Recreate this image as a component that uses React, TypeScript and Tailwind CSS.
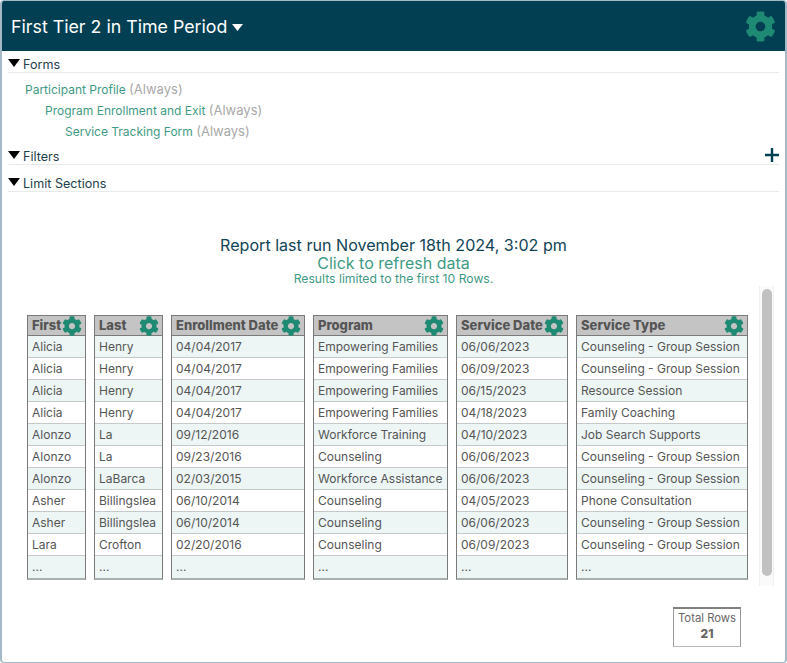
import { FaCog } from 'react-icons/fa';

const columns = [
    { title: 'First', width: 'w-[59px]', values: ['Alicia', 'Alicia', 'Alicia', 'Alicia', 'Alonzo', 'Alonzo', 'Alonzo', 'Asher', 'Asher', 'Lara'] },
    { title: 'Last', width: 'w-[69px]', values: ['Henry', 'Henry', 'Henry', 'Henry', 'La', 'La', 'LaBarca', 'Billingslea', 'Billingslea', 'Crofton'] },
    { title: 'Enrollment Date', width: 'w-[134px]', values: ['04/04/2017', '04/04/2017', '04/04/2017', '04/04/2017', '09/12/2016', '09/23/2016', '02/03/2015', '06/10/2014', '06/10/2014', '02/20/2016'] },
    { title: 'Program', width: 'w-[135px]', values: ['Empowering Families', 'Empowering Families', 'Empowering Families', 'Empowering Families', 'Workforce Training', 'Counseling', 'Workforce Assistance', 'Counseling', 'Counseling', 'Counseling'] },
    { title: 'Service Date', width: 'w-[112px]', values: ['06/06/2023', '06/09/2023', '06/15/2023', '04/18/2023', '04/10/2023', '06/06/2023', '06/06/2023', '04/05/2023', '06/06/2023', '06/09/2023'] },
    { title: 'Service Type', width: 'w-[172px]', values: ['Counseling - Group Session', 'Counseling - Group Session', 'Resource Session', 'Family Coaching', 'Job Search Supports', 'Counseling - Group Session', 'Counseling - Group Session', 'Phone Consultation', 'Counseling - Group Session', 'Counseling - Group Session'] },
];

function Triangle() {
    return (
        <svg width="12" height="8" viewBox="0 0 12 8" className="shrink-0">
            <path d="M0 0h12L6 8z" fill="#000" />
        </svg>
    );
}

function Section({ label, className, plus }: { label: string; className: string; plus?: boolean }) {
    return (
        <div className={`flex h-[17px] items-center gap-[3px] border-b border-[#e6eaea] ${className}`}>
            <span className="-mt-[2px]"><Triangle /></span>
            <span className="mt-[2px] text-[12.6px] text-[#1d3f4d]">{label}</span>
            {plus && (
                <svg width="14" height="14" viewBox="0 0 14 14" className="ml-auto -mt-[3px]">
                    <path d="M0 7h14M7 0v14" stroke="#033f52" strokeWidth="2.4" />
                </svg>
            )}
        </div>
    );
}

function FormLine({ name, indent }: { name: string; indent: string }) {
    return (
        <div className={`h-[21px] text-[12px] leading-[21px] ${indent}`}>
            <span className="text-[#3f9a85]">{name}</span> <span className="text-[13px] text-[#a9a9a9]">(Always)</span>
        </div>
    );
}

function Column({ title, width, values }: { title: string; width: string; values: string[] }) {
    return (
        <div className={`shrink-0 border-x border-b-2 border-x-[#7a7a7a] border-b-[#a8b0b0] ${width}`}>
            <div className="flex h-[21px] items-center justify-between border-y border-y-[#7a7a7a] bg-[#c4c4c4] pl-[4px] pr-[2px]">
                <span className="whitespace-nowrap text-[13px] font-extrabold text-[#555]">{title}</span>
                <FaCog className="mr-[1px] shrink-0 text-[#1f8a73]" size={20} />
            </div>
            {[...values, '...'].map((value, i) => (
                <div key={i} className={`flex h-[22px] items-center whitespace-nowrap border-b border-[#c4c9c9] pl-[4px] text-[12px] text-[#555] last:border-b-0 ${i % 2 === 0 ? 'bg-[#edf6f5]' : 'bg-white'}`}>
                    {value}
                </div>
            ))}
        </div>
    );
}

export default function App() {
    return (
        <div className="h-[663px] w-[787px] bg-white font-['Inter','Liberation_Sans',sans-serif]">
            <div className="flex h-full flex-col overflow-hidden rounded-[4px] border-x-2 border-y border-[#a3bac6]">
                <div className="flex h-[50px] shrink-0 items-center justify-between bg-[#033f52] pl-[9px] pr-[9px]">
                    <div className="flex items-center gap-[5px] pt-[2px] text-[17.8px] text-white">
                        First Tier 2 in Time Period
                        <svg width="11" height="7" viewBox="0 0 11 7"><path d="M0 0h11L5.5 7z" fill="#fff" /></svg>
                    </div>
                    <FaCog className="text-[#1f8a73]" size={31} />
                </div>

                <div className="mr-[6px] pl-[6px]">
                    <Section label="Forms" className="mt-[5px]" />
                    <div className="h-[6px]" />
                    <FormLine name="Participant Profile" indent="pl-[17px]" />
                    <FormLine name="Program Enrollment and Exit" indent="pl-[37px]" />
                    <FormLine name="Service Tracking Form" indent="pl-[57px]" />
                    <Section label="Filters" className="mt-[6px]" plus />
                    <Section label="Limit Sections" className="mt-[10px]" />
                </div>

                <div className="mt-[45px] text-center">
                    <div className="h-[18px] text-[16.1px] leading-[17px] text-[#114456]">Report last run November 18th 2024, 3:02 pm</div>
                    <div className="h-[17px] text-[16px] leading-[17px] text-[#3f9a85]">Click to refresh data</div>
                    <div className="h-[14px] text-[12.2px] leading-[14px] text-[#3f9a85]">Results limited to the first 10 Rows.</div>
                </div>

                <div className="relative h-[300px] shrink-0 pl-[25px] pt-[29px]">
                    <div className="flex gap-[8px]">
                        {columns.map(c => <Column key={c.title} {...c} />)}
                    </div>
                    <div className="absolute bottom-0 right-[11px] top-0 w-[15px] border-x border-[#f0f0f0] bg-[#fafafa]">
                        <div className="mx-auto mt-[3px] h-[287px] w-[10px] rounded-[5px] bg-[#c1c1c1]" />
                    </div>
                </div>

                <div className="mr-[44px] mt-[21px] flex justify-end">
                    <div className="flex h-[40px] w-[68px] flex-col items-center border-x border-b border-t-2 border-x-[#999] border-b-[#bbb] border-t-[#808080] text-[#666]">
                        <span className="text-[11.3px] leading-[18px]">Total Rows</span>
                        <span className="text-[12px] font-extrabold leading-[14px]">21</span>
                    </div>
                </div>
            </div>
        </div>
    );
}
